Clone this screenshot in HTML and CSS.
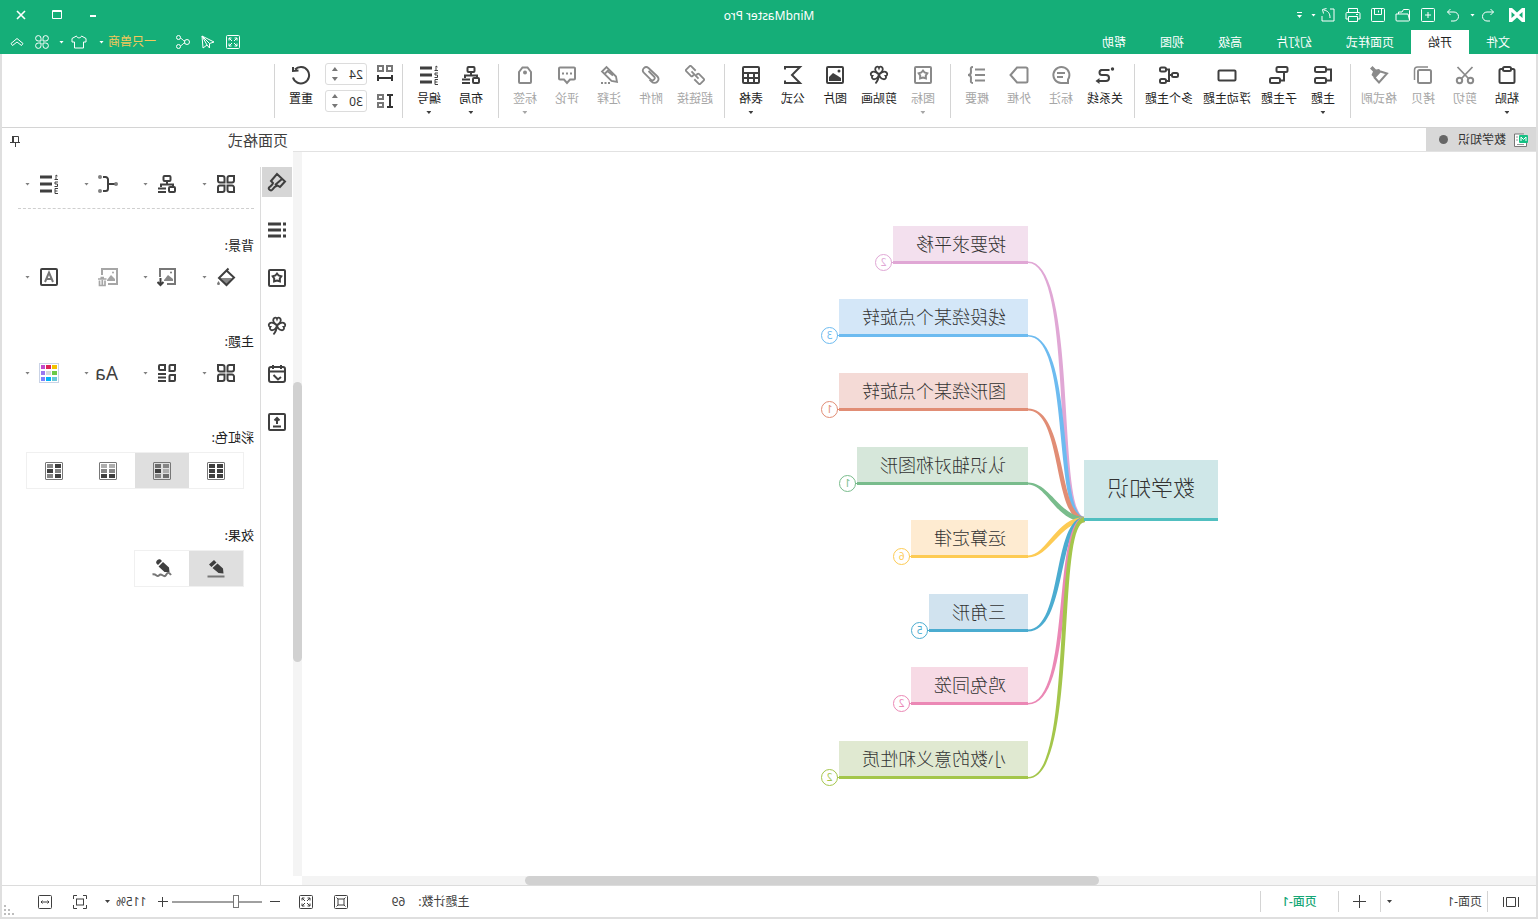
FILE: index.html
```html
<!DOCTYPE html>
<html lang="zh-CN">
<head>
<meta charset="utf-8">
<title>MindMaster Pro</title>
<link rel="stylesheet" href="styles.css">
</head>
<body>
<svg class="defs" aria-hidden="true">
  <symbol id="grid4" viewBox="0 0 20 20"><path d="M2 2h4.500a2 2 0 0 1 2 2v4.500h-4.500a2 2 0 0 1-2-2zM18 2v4.500a2 2 0 0 1-2 2h-4.500v-4.500a2 2 0 0 1 2-2zM2 18v-4.500a2 2 0 0 1 2-2h4.500v4.500a2 2 0 0 1-2 2zM18 18h-4.500a2 2 0 0 1-2-2v-4.500h4.500a2 2 0 0 1 2 2z"/></symbol>
  <symbol id="star" viewBox="0 0 20 20"><rect x="2" y="2" width="16" height="16" rx="1"/><path d="M10 5.500l1.600 2 2.700.8-1.500 2.200.1 2.800-2.900-.8-2.900.8.1-2.800-1.500-2.200 2.700-.8z"/></symbol>
  <symbol id="clover" viewBox="0 0 20 20"><path stroke-width="1.800" d="M10 9C7 7 5.500 5 6.500 3S9.500 1.500 10 3c.5-1.500 2.500-2 3.500 0S13 7 10 9zM10 9.500C7 6.500 4 6 2.500 7.500s-.5 3.500.8 3.500c-1 1.500.2 3.500 2.200 3.200S9 12.500 10 9.500zM10 9.500c3-3 6-3.500 7.500-2s.5 3.500-.8 3.500c1 1.500-.2 3.500-2.200 3.200S11 12.500 10 9.500zM10 9.500c.2 4 1.200 6.500 3.500 9"/></symbol>
  <symbol id="layout" viewBox="0 0 20 20"><rect x="6.500" y="2" width="7" height="5" rx="1"/><path d="M10 7v4M4 13v-2.500h12v2.500M11 14.500h8M11 18h8"/><rect x="2" y="13" width="6" height="5" rx="1"/></symbol>
  <symbol id="numbers" viewBox="0 0 20 20"><path stroke-width="3" d="M7 3h12M7 10h12M7 17h12"/><path stroke-width="1" d="M1.500 2l1.500-1v4.500M1 5.500h3.500M1 8h3v2h-2.500v2.500h3M1 14.500h3v5h-3M1.500 17h2.500"/></symbol>
  <symbol id="expand" viewBox="0 0 16 16"><rect x="1.500" y="1.500" width="13" height="13" rx="1"/><path d="M4 6.500v-2.500h2.500M4 4l3 3M9.500 4h2.500v2.500M12 4l-3 3M4 9.500v2.500h2.500M4 12l3-3M12 9.500v2.500h-2.500M12 12l-3-3"/></symbol>
</svg>
<div class="app">
  <header class="top">
    <div class="titlebar">
      <div class="quick">
        <svg class="logo" viewBox="0 0 16 16"><path fill="#fff" d="M0 1l3 0 5 4.500 5-4.500h3v14l-3 0-5-4.500-5 4.500h-3zM2.500 5v6l3.500-3zM13.500 5v6l-3.500-3z" fill-rule="evenodd"/></svg>
        <button class="tool undo" aria-label="撤销"><svg class="i16" viewBox="0 0 16 16"><path d="M5.500 2L2.500 5l3 3M2.500 5h6.500a4.500 4.500 0 0 1 0 9h-3"/></svg><i class="caret"></i></button>
        <button class="tool" aria-label="恢复"><svg class="i16" viewBox="0 0 16 16"><path d="M10.500 2l3 3-3 3M13.500 5h-6.500a4.500 4.500 0 0 0 0 9h3"/></svg></button>
        <button class="tool" aria-label="新建"><svg class="i16" viewBox="0 0 16 16"><rect x="1.500" y="1.500" width="13" height="13" rx="1"/><path d="M8 5v6M5 8h6"/></svg></button>
        <button class="tool" aria-label="打开"><svg class="i16" viewBox="0 0 16 16"><path d="M1.500 13v-9.500a1 1 0 0 1 1-1h5l1.500 2.500h3.500v2M1.500 13l1.500-6h12v6a1 1 0 0 1-1 1h-11.500a1 1 0 0 1-1-1z"/></svg></button>
        <button class="tool" aria-label="保存"><svg class="i16" viewBox="0 0 16 16"><rect x="1.500" y="1.500" width="13" height="13" rx="1"/><path d="M4.500 2v5.500h7v-5.500M7.500 3.500v2"/></svg></button>
        <button class="tool" aria-label="打印"><svg class="i16" viewBox="0 0 16 16"><path d="M3.500 5v-3.500h9v3.500M3.500 12h-2.500v-5.500a1 1 0 0 1 1-1h12a1 1 0 0 1 1 1v5.500h-2.500M3.500 9.500h9v5h-9zM3 7.500h2"/></svg></button>
        <button class="tool export" aria-label="导出"><svg class="i16" viewBox="0 0 16 16"><path d="M6 2h-4v12h12v-5M6 11c0-5 2-7 6-8M9.500 1.500l4 1-1 4"/></svg><i class="caret"></i></button>
        <button class="tool" aria-label="自定义"><i class="bar"></i><i class="caret"></i></button>
      </div>
      <h1>MindMaster Pro</h1>
      <div class="window">
        <button aria-label="最小化"><svg class="i16" viewBox="0 0 16 16"><path stroke-width="2" d="M5 9h6"/></svg></button>
        <button aria-label="最大化"><svg class="i16" viewBox="0 0 16 16"><path d="M3.500 3.500h9v8h-9zM3.500 4.500h9"/></svg></button>
        <button aria-label="关闭"><svg class="i16" viewBox="0 0 16 16"><path stroke-width="1.600" d="M4 4l8 8M12 4l-8 8"/></svg></button>
      </div>
    </div>
    <div class="tabrow">
      <nav class="tabs">
        <button>文件</button><button class="on">开始</button><button>页面样式</button><button>幻灯片</button><button>高级</button><button>视图</button><button>帮助</button>
      </nav>
      <div class="account">
        <button aria-label="全屏"><svg class="i16"><use href="#expand"/></svg></button>
        <button aria-label="发送"><svg class="i16" viewBox="0 0 16 16"><path d="M14 2L2 8l4.500 1.500v4.500l2.500-3 4 3zM14 2l-7.500 7.500M14 2l-5 9"/></svg></button>
        <button aria-label="分享"><svg class="i16" viewBox="0 0 16 16"><circle cx="4" cy="8" r="2.500"/><circle cx="12.500" cy="3.500" r="2"/><circle cx="12.500" cy="12.500" r="2"/><path d="M6 7c2 0 2.500-2 4.500-3M6 9c2 0 2.500 2 4.500 3"/></svg></button>
        <button class="user">一只兽商<i class="caret"></i></button>
        <button class="skin" aria-label="皮肤"><svg class="i16" viewBox="0 0 16 16"><path d="M5.500 2L1 4.500v3.500h2.500v6h9v-6H15V4.500L10.500 2c-.5 2.500-4.500 2.500-5 0z"/></svg><i class="caret"></i></button>
        <button aria-label="应用"><svg class="i16" viewBox="0 0 16 16"><path d="M7 7H4.500A2.700 2.700 0 1 1 7 4.500zM9 7h2.500A2.700 2.700 0 1 0 9 4.500zM7 9H4.500A2.700 2.700 0 1 0 7 11.500zM9 9h2.500A2.700 2.700 0 1 1 9 11.500z"/></svg></button>
        <button aria-label="收起"><svg class="i16" viewBox="0 0 16 16"><path d="M2 9.500l6-5 6 5-1.500 2L8 8l-4.500 3.500z"/></svg></button>
      </div>
    </div>
  </header>
  <div class="workspace">
    <div class="ribbon">
      <div class="group">
        <button><svg class="i20" viewBox="0 0 20 20"><rect x="2.500" y="4" width="15" height="14" rx="1.500"/><rect x="6" y="2" width="8" height="4" rx="1.500" fill="#fff"/></svg><span>粘贴</span><i class="caret"></i></button>
        <button disabled><svg class="i20" viewBox="0 0 20 20"><circle cx="4.500" cy="15.500" r="2.700"/><circle cx="15.500" cy="15.500" r="2.700"/><path stroke-width="1.800" d="M2.500 2L13.500 13.500M17.500 2L6.500 13.500"/></svg><span>剪切</span></button>
        <button disabled><svg class="i20" viewBox="0 0 20 20"><path stroke-width="1.500" d="M5 2h10.500a3 3 0 0 1 3 3v10"/><rect x="2" y="5" width="13" height="13" rx="1.500"/></svg><span>拷贝</span></button>
        <button disabled><svg class="i20" viewBox="0 0 20 20"><path fill="currentColor" stroke="none" d="M19 3.500L16.500 1l-3.500 3.500L10 4 7.500 6.500 14 13.500l3.500-3.500-1.500-3.500z"/><path d="M8.500 6.500L2 8.500l8 9L15 12"/></svg><span>格式刷</span></button>
      </div>
      <div class="group">
        <button><svg class="i20" viewBox="0 0 20 20"><rect x="7" y="2" width="11" height="5" rx="1.500"/><rect x="7" y="13" width="11" height="5" rx="1.500"/><path d="M7 4.500H2v11h5"/></svg><span>主题</span><i class="caret"></i></button>
        <button><svg class="i20" viewBox="0 0 20 20"><rect x="1.500" y="2" width="11" height="5" rx="1.500"/><rect x="9" y="13" width="10" height="5" rx="1.500"/><path d="M5 7v8.500h4"/></svg><span>子主题</span></button>
        <button><svg class="i20" viewBox="0 0 20 20"><rect x="1.500" y="5.500" width="17" height="10" rx="1"/></svg><span>浮动主题</span></button>
        <button><svg class="i20" viewBox="0 0 20 20"><rect x="1" y="8" width="6" height="4" rx="1.500"/><rect x="13" y="2.500" width="6" height="4" rx="1.500"/><rect x="13" y="14" width="6" height="4" rx="1.500"/><path d="M7 10h3M13 4.500h-3v11.500h3"/></svg><span>多个主题</span></button>
      </div>
      <div class="group">
        <button><svg class="i20" viewBox="0 0 20 20"><circle cx="2.500" cy="4" r="1.700" fill="currentColor" stroke="none"/><path d="M14.500 5H8a2.500 2.500 0 0 0-.5 0M5.500 5h7.500a2.500 2.500 0 0 1 0 5H9a3 3 0 0 0 0 6h7"/><path fill="currentColor" stroke="none" d="M15.500 13l4 3-4 3z"/></svg><span>关系线</span></button>
        <button disabled><svg class="i20" viewBox="0 0 20 20"><path d="M3 18v-3.500a8 8 0 1 1 7 3.500zM6 8h8M8 12h6"/></svg><span>标注</span></button>
        <button disabled><svg class="i20" viewBox="0 0 20 20"><path d="M3 2.500h9l6.500 7.500-6.500 7.500H3a1.500 1.500 0 0 1-1.500-1.500v-12A1.500 1.500 0 0 1 3 2.500z"/></svg><span>外框</span></button>
        <button disabled><svg class="i20" viewBox="0 0 20 20"><path d="M2 4.500h10M2 10h10M2 15.500h10M14 2c3 0 2 2 2 5 0 2 .5 3 3 3-2.500 0-3 1-3 3 0 3 1 5-2 5"/></svg><span>概要</span></button>
      </div>
      <div class="group">
        <button disabled><svg class="i20"><use href="#star"/></svg><span>图标</span><i class="caret"></i></button>
        <button><svg class="i20"><use href="#clover"/></svg><span>剪贴画</span></button>
        <button><svg class="i20" viewBox="0 0 20 20"><rect x="2" y="2" width="16" height="16" rx="1"/><path fill="currentColor" stroke="none" d="M4 16v-3l3-2 5-3 4 4v4z"/><circle cx="6" cy="6" r="1.500" fill="currentColor" stroke="none"/></svg><span>图片</span></button>
        <button><svg class="i20" viewBox="0 0 20 20"><path d="M18 4.500V2H3l8 8-8 8h15v-2.500"/></svg><span>公式</span></button>
        <button><svg class="i20" viewBox="0 0 20 20"><rect x="2" y="2" width="16" height="16" rx="1"/><path d="M2 8h16M2 13h16M7 8v10M13 8v10"/></svg><span>表格</span><i class="caret"></i></button>
      </div>
      <div class="group">
        <button disabled><svg class="i20" viewBox="0 0 20 20"><path stroke-width="1.800" transform="rotate(-45 10 10)" d="M7.500 13.500H1a1 1 0 0 1-1-1v-5a1 1 0 0 1 1-1h7a1 1 0 0 1 1 1V9M12.500 6.500H19a1 1 0 0 1 1 1v5a1 1 0 0 1-1 1h-7a1 1 0 0 1-1-1V11M5 10h10"/></svg><span>超链接</span></button>
        <button disabled><svg class="i20" viewBox="0 0 20 20"><path stroke-width="1.800" d="M12.500 6L7 11.500a2.200 2.200 0 0 0 3.200 3.200l7-7c2.800-3.200-1.500-7.500-4.700-4.700L4 11c-4 4 1.500 9.500 5.500 5.500l2-2"/></svg><span>附件</span></button>
        <button disabled><svg class="i20" viewBox="0 0 20 20"><path stroke-width="1.800" d="M2 17l1-5.500L12.500 2l4.500 4.500-9.500 9.500zM10 4.500l4.500 4.500M6 10.500l5-4"/><path stroke-dasharray="2 1.500" d="M9 18h10"/></svg><span>注释</span></button>
        <button disabled><svg class="i20" viewBox="0 0 20 20"><path d="M3 2.500h14a1 1 0 0 1 1 1v10a1 1 0 0 1-1 1h-4l-3 3.500-3-3.500H3a1 1 0 0 1-1-1v-10a1 1 0 0 1 1-1z"/><path stroke-dasharray="2 2" d="M5 8.500h10"/></svg><span>评论</span></button>
        <button disabled><svg class="i20" viewBox="0 0 20 20"><path d="M4 17V7l3.500-4.500h5L16 7v10a1 1 0 0 1-1 1H5a1 1 0 0 1-1-1z"/><circle cx="10" cy="7.500" r="2" fill="currentColor" stroke="none"/></svg><span>标签</span><i class="caret"></i></button>
      </div>
      <div class="group">
        <button><svg class="i20"><use href="#layout"/></svg><span>布局</span><i class="caret"></i></button>
        <button><svg class="i20"><use href="#numbers"/></svg><span>编号</span><i class="caret"></i></button>
      </div>
      <div class="group">
        <div class="spacing">
          <label for="hgap" aria-label="水平间距"><svg class="i20" viewBox="0 0 20 20"><path stroke="#777" d="M3 2h5v5H3zM12 2h5v5h-5z"/><path d="M3 14h14M3 11v6M17 11v6"/></svg></label>
          <div class="spin"><input id="hgap" value="24"><span class="arrows"><button aria-label="增加"></button><button class="down" aria-label="减少"></button></span></div>
          <label for="vgap" aria-label="垂直间距"><svg class="i20" viewBox="0 0 20 20"><path stroke="#777" d="M12 4h5v4h-5zM12 12h5v4h-5z"/><path d="M5 4v12M2 4h6M2 16h6"/></svg></label>
          <div class="spin"><input id="vgap" value="30"><span class="arrows"><button aria-label="增加"></button><button class="down" aria-label="减少"></button></span></div>
        </div>
        <button><svg class="i20" viewBox="0 0 20 20"><path d="M4 4.500a8.200 8.200 0 1 1-2 8M7.500 5.500L2 6V2" transform="translate(20 0) scale(-1 1)"/></svg><span>重置</span></button>
      </div>
    </div>
    <main class="main">
      <section class="document">
        <div class="doctabs">
          <button class="doctab"><svg class="i16" viewBox="0 0 16 16"><path fill="#fff" stroke="#777" d="M5 2h9.500v12.500H2.500V11"/><path stroke="#999" d="M11 5h2M11 8h2M5 12.500h7"/><rect x="1" y="3" width="9" height="8" rx="1" fill="#15c083" stroke="none"/><path stroke="#fff" d="M3 9V5l2.500 2.500L8 5v4"/></svg>数学知识<i class="dot"></i></button>
        </div>
        <div class="viewport">
          <div class="canvas">
            <svg class="links" viewBox="2 152 1234 724">
              <path fill="#e0a7d5" d="M453 517C482 517 459 261.500 510 261.500V263C463 263 488 522 453 522z"/>
              <path fill="#6dbbf0" d="M453 517C481 517 462 335 510 335V336.500C466 336.500 487 522 453 522z"/>
              <path fill="#e18d75" d="M453 517C480 517 471 408.500 510 408.500V410.500C475 410.500 486 522 453 522z"/>
              <path fill="#79bc8c" d="M453 517C478 517 488 482.500 510 482.500V484.500C491 484.500 482 522 453 522z"/>
              <path fill="#fdcb54" d="M453 522C478 522 488 557.500 510 557.500V555.500C491 555.500 482 517 453 517z"/>
              <path fill="#4bacd0" d="M453 522C480 522 471 631.500 510 631.500V629.500C475 629.500 486 517 453 517z"/>
              <path fill="#eb88b5" d="M453 522C481 522 462 704.500 510 704.500V703C466 703 487 517 453 517z"/>
              <path fill="#a4c64b" d="M453 522C482 522 459 778.500 510 778.500V777C463 777 488 517 453 517z"/>
            </svg>
            <div class="topic root">数学知识</div>
            <div class="topic pink">按要求平移<b>2</b></div>
            <div class="topic blue">线段绕某个点旋转<b>3</b></div>
            <div class="topic red">图形绕某个点旋转<b>1</b></div>
            <div class="topic green">认识轴对称图形<b>1</b></div>
            <div class="topic yellow">运算定律<b>6</b></div>
            <div class="topic cyan">三角形<b>5</b></div>
            <div class="topic rose">鸡兔同笼<b>2</b></div>
            <div class="topic lime">小数的意义和性质<b>2</b></div>
          </div>
          <div class="vscroll"><i></i></div>
          <div class="hscroll"><i></i></div>
        </div>
      </section>
      <aside class="panel">
        <div class="panelhead"><h2>页面格式</h2><button aria-label="固定"><svg class="i12" viewBox="0 0 12 12"><path d="M2.500 1.500h6v6h-6zM1 7.500h10M5.500 8v4"/><path stroke-width="2" d="M8 1v6"/></svg></button></div>
        <div class="panelbody">
          <nav class="strip">
            <button class="on" aria-label="格式"><svg class="i20" viewBox="0 0 20 20"><path d="M10 2L2 9.500l5 5.500 2.500-1.500c2.500.5 3.500 1.500 5 4 1.500 2 4.500 0 3.500-2-1.500-1.500-3.500-2-4-4.500L16 9zM5 7l7 6"/></svg></button>
            <button aria-label="大纲"><svg class="i20" viewBox="0 0 20 20"><path stroke-width="3" d="M6 4h13M6 10h13M6 16h13M1 4h3M1 10h3M1 16h3"/></svg></button>
            <button aria-label="图标"><svg class="i20"><use href="#star"/></svg></button>
            <button aria-label="剪贴画"><svg class="i20"><use href="#clover"/></svg></button>
            <button aria-label="任务"><svg class="i20" viewBox="0 0 20 20"><rect x="2" y="3" width="16" height="15" rx="2"/><path d="M2 7.500h16M6 1v4M14 1v4M6 13l3 2.500 4.500-4.500"/></svg></button>
            <button aria-label="导出"><svg class="i20" viewBox="0 0 20 20"><rect x="2" y="2" width="16" height="16" rx="1"/><path d="M6 14.500h8M10 12V6M7.500 8.500L10 6l2.500 2.500"/></svg></button>
          </nav>
          <div class="settings">
            <div class="tools">
              <button aria-label="结构"><svg class="i20"><use href="#grid4"/></svg><i class="caret"></i></button>
              <button aria-label="布局"><svg class="i20"><use href="#layout"/></svg><i class="caret"></i></button>
              <button aria-label="连线"><svg class="i20" viewBox="0 0 20 20"><g fill="#808080" stroke="none"><circle cx="2" cy="10" r="2"/><circle cx="18" cy="3" r="2"/><circle cx="18" cy="17" r="2"/></g><path d="M3.500 10H10M15 3h-2.500A2.500 2.500 0 0 0 10 5.500v9a2.500 2.500 0 0 0 2.500 2.500H15"/></svg><i class="caret"></i></button>
              <button aria-label="编号"><svg class="i20"><use href="#numbers"/></svg><i class="caret"></i></button>
            </div>
            <hr>
            <h3>背景:</h3>
            <div class="tools">
              <button aria-label="填充"><svg class="i20" viewBox="0 0 20 20"><path fill="#888" stroke="none" d="M4 11h12l-6.500 7z"/><path d="M7.500 1.500L17 11l-7.500 7L2 10.500 9.500 3.500"/><path fill="#777" stroke="none" d="M17.500 14l1.500 2.500a1.500 1.500 0 1 1-3 0z"/></svg><i class="caret"></i></button>
              <button aria-label="背景图"><svg class="i20" viewBox="0 0 20 20"><path stroke="#777" d="M10 17H2V2h15v8"/><path fill="#888" stroke="none" d="M4 14v-2l5-4 4 5v1z"/><circle cx="6" cy="5.500" r="1" fill="#777" stroke="none"/><path d="M16.500 11v7M13.500 15l3 3 3-3"/></svg><i class="caret"></i></button>
              <button disabled aria-label="删除背景"><svg class="i20" viewBox="0 0 20 20"><path d="M10 17H1V2h15v6"/><path fill="currentColor" stroke="none" d="M3 14v-2l4-4 4 5v1z"/><circle cx="5" cy="5.500" r="1" fill="currentColor" stroke="none"/><path stroke-width="1.700" d="M11.500 12h8.500M14 10.500h3.500M13 13.500v5h5.500v-5M15.700 13v5"/></svg></button>
              <button aria-label="水印"><svg class="i20" viewBox="0 0 20 20"><rect x="2" y="2" width="16" height="16" rx="1"/><path stroke="#777" d="M6 15l4-9.500 4 9.500M7.500 12h5"/></svg><i class="caret"></i></button>
            </div>
            <h3>主题:</h3>
            <div class="tools">
              <button aria-label="主题"><svg class="i20"><use href="#grid4"/></svg><i class="caret"></i></button>
              <button aria-label="风格"><svg class="i20" viewBox="0 0 20 20"><path d="M2 2h4.500a1 1 0 0 1 1 1v5H3a1 1 0 0 1-1-1zM12 2h5a1 1 0 0 1 1 1v3a1 1 0 0 1-1 1h-5zM2 12h4.500a1 1 0 0 1 1 1v5H3a1 1 0 0 1-1-1zM11 11h8M11 14.500h8M11 18h8"/></svg><i class="caret"></i></button>
              <button class="font" aria-label="字体"><span>Aa</span><i class="caret"></i></button>
              <button aria-label="颜色"><svg class="i20" viewBox="0 0 20 20"><rect x=".5" y=".5" width="19" height="19" fill="#fff" stroke="#c9d3e6" stroke-width="1"/><g stroke="none"><path fill="#f2c100" d="M2 2h5v4H2z"/><path fill="#de2457" d="M8 2h5v4H8z"/><path fill="#c24bcb" d="M14 2h4v4h-4z"/><path fill="#6cca45" d="M2 8h5v4H2z"/><path fill="#d9d9d9" d="M8 8h5v4H8z"/><path fill="#9a78f0" d="M14 8h4v4h-4z"/><path fill="#68c8d8" d="M2 14h5v4H2z"/><path fill="#00b4f5" d="M8 14h5v4H8z"/><path fill="#7b83ff" d="M14 14h4v4h-4z"/></g></svg><i class="caret"></i></button>
            </div>
            <h3>彩虹色:</h3>
            <div class="segment">
              <button aria-label="彩虹色一"><span class="swatch"><i class="d"></i><i class="d"></i><i class="d"></i><i class="d"></i><i class="d"></i><i class="d"></i></span></button>
              <button class="on" aria-label="彩虹色二"><span class="swatch"><i class="g"></i><i class="m"></i><i class="l"></i><i class="d"></i><i class="m"></i><i class="g"></i></span></button>
              <button aria-label="彩虹色三"><span class="swatch"><i class="l"></i><i class="l"></i><i class="g"></i><i class="g"></i><i class="d"></i><i class="d"></i></span></button>
              <button aria-label="彩虹色四"><span class="swatch"><i class="d"></i><i class="g"></i><i class="g"></i><i class="d"></i><i class="d"></i><i class="g"></i></span></button>
            </div>
            <h3 class="effect">效果:</h3>
            <div class="segment">
              <button class="on" aria-label="钢笔"><svg class="i20" viewBox="0 0 20 20"><path fill="currentColor" stroke="none" d="M2.500 14.500l.5-5 5.500-5 5 4.500-6 5zM9.500 3.500L12 1l5 4.500L14.500 8z"/><path stroke="#777" d="M1.500 17.500h17"/></svg></button>
              <button aria-label="手绘"><svg class="i20" viewBox="0 0 20 20"><path fill="currentColor" stroke="none" d="M2.500 13l.5-4.500 6-5.500 4.500 4.500-6 5.500zM10 2l1.500-1.500c2-1.500 5.500 2 4 4L14 6z"/><path stroke="#777" d="M1 16c2-3 3.500-3 5 0s4-1 5.500-.5 2 2.500 4 1 2.500-1.500 4-1"/></svg></button>
            </div>
          </div>
        </div>
      </aside>
    </main>
    <footer class="status">
      <button class="views" aria-label="页面视图"><svg class="i16" viewBox="0 0 16 16"><path d="M.5 3v10M15.500 3v10M3.500 3.500h9v9h-9z"/></svg></button>
      <button class="pagepick">页面-1<i class="caret"></i></button>
      <button class="add" aria-label="添加页面"><svg class="i16" viewBox="0 0 16 16"><path d="M7.500 1v13M1 7.500h13"/></svg></button>
      <button class="page">页面-1</button>
      <div class="right">
        <p class="count"><span>主题计数:</span><span>69</span></p>
        <button aria-label="适应页面"><svg class="i16" viewBox="0 0 16 16"><rect x="1.500" y="1.500" width="13" height="13" rx="1"/><rect x="5" y="5" width="6" height="6"/><path d="M3.500 3.500l1.500 1.500M12.500 3.500L11 5M3.500 12.500L5 11M12.500 12.500L11 11"/></svg></button>
        <button class="full" aria-label="全屏"><svg class="i16"><use href="#expand"/></svg></button>
        <div class="zoom">
          <button aria-label="缩小"><svg class="i12" viewBox="0 0 12 12"><path d="M1 5.500h10"/></svg></button>
          <input type="range" aria-label="缩放" min="0" max="100" value="27">
          <button aria-label="放大"><svg class="i12" viewBox="0 0 12 12"><path d="M1 5.500h10M6.500 1v10"/></svg></button>
        </div>
        <button class="percent">115%<i class="caret"></i></button>
        <button aria-label="实际大小"><svg class="i16" viewBox="0 0 16 16"><rect x="4.500" y="5" width="7" height="6"/><path d="M1.500 5V1.500H5M11 1.500h3.500V5M1.500 11v3.500H5M11 14.500h3.500V11"/></svg></button>
        <button class="fitw" aria-label="适应宽度"><svg class="i16" viewBox="0 0 16 16"><rect x="1.500" y="1.500" width="13" height="13" rx="1"/><path d="M4 8h8M5.500 6.500L4 8l1.500 1.500M10.500 6.500L12 8l-1.500 1.500"/></svg></button>
        <svg class="grip" viewBox="0 0 12 12"><path fill="#bdbdbd" stroke="none" d="M8 0h2v2H8zM4 4h2v2H4zM8 4h2v2H8zM0 8h2v2H0zM4 8h2v2H4zM8 8h2v2H8z"/></svg>
      </div>
    </footer>
  </div>
</div>
</body>
</html>
```

FILE: styles.css
```css
* { box-sizing: border-box; }
body {
  margin: 0;
  overflow: hidden;
  font: 12px/16px "Noto Sans", "Noto Sans CJK SC", sans-serif;
  color: #333;
}
button {
  border: 0;
  padding: 0;
  background: none;
  font: inherit;
  color: inherit;
  display: flex;
  align-items: center;
}
h1, h2, h3, p { margin: 0; font-weight: 400; }
.defs { position: absolute; width: 0; height: 0; }
svg { display: block; fill: none; stroke: currentColor; stroke-width: 2; flex: none; }
.i12 { width: 12px; height: 12px; stroke-width: 1; }
.i16 { width: 16px; height: 16px; stroke-width: 1; }
.i20 { width: 20px; height: 20px; }
.caret {
  width: 5px;
  height: 3px;
  background: currentColor;
  clip-path: polygon(0 0, 100% 0, 50% 100%);
  flex: none;
}

/* The whole window is shown flipped left to right */
.app {
  display: flex;
  flex-direction: column;
  height: 100vh;
  transform: scaleX(-1);
  background: #fff;
}

/* Title bar and tabs */
.top { background: #15ae78; color: #fff; }
.titlebar { display: grid; grid-template-columns: 1fr auto 1fr; align-items: center; height: 30px; }
.titlebar h1 { font-size: 12px; line-height: 16px; padding-top: 1px; }
.quick { display: flex; align-items: center; gap: 9px; padding-left: 13px; }
.logo { width: 16px; height: 16px; stroke: none; margin-right: 4px; }
.tool { gap: 5px; }
.tool.export { gap: 4px; }
.tool:last-child { flex-direction: column; gap: 2px; }
.bar { width: 5px; height: 1px; background: currentColor; }
.window { display: flex; justify-content: flex-end; padding-right: 3px; }
.window button { width: 36px; justify-content: center; }
.tabrow { display: flex; justify-content: space-between; height: 24px; }
.tabs { display: flex; padding-left: 11px; }
.tabs button { padding: 2px 17px 0; }
.tabs .on { background: #fff; color: #222; }
.account { display: flex; align-items: center; gap: 9px; padding-right: 9px; }
.account .user { gap: 4px; color: #f5c85a; margin: 0 3px 0 10px; }
.account .user .caret { color: #fff; }
.account .skin { gap: 7px; }

.workspace {
  flex: 1;
  min-height: 0;
  display: flex;
  flex-direction: column;
  border: solid #dfdfdf;
  border-width: 0 2px 2px;
}

/* Ribbon */
.ribbon { display: flex; height: 74px; padding-left: 8px; border-bottom: 1px solid #d4d4d4; flex: none; }
.group { display: flex; }
.group::after { content: ""; width: 1px; height: 54px; margin: 10px 6px 0 5px; background: #d4d4d4; }
.group > button {
  flex-direction: column;
  min-width: 42px;
  padding: 11px 5px 0;
  color: #3f3f3f;
  white-space: nowrap;
}
.group > button span { margin-top: 6px; color: #222; }
.group > button .caret { margin-top: 4px; }
.group > button:disabled { color: #8a8a8a; }
.group > button:disabled span, .group > button:disabled .caret { color: #a6a6a6; }
.spacing {
  display: grid;
  grid-template-columns: 20px 42px;
  grid-template-rows: 22px 22px;
  gap: 5px 8px;
  align-items: center;
  padding: 9px 3px 0 1px;
}
.spin { display: flex; height: 22px; border: 1px solid #dcdcdc; border-radius: 3px; }
.spin input { flex: 1; min-width: 0; border: 0; padding: 2px 0 0 3px; font: inherit; color: #333; background: none; }
.arrows { display: flex; flex-direction: column; justify-content: center; gap: 6px; padding-right: 6px; }
.arrows button { width: 6px; height: 4px; background: #777; clip-path: polygon(50% 0, 100% 100%, 0 100%); }
.arrows .down { clip-path: polygon(0 0, 100% 0, 50% 100%); }

/* Document area */
.main { flex: 1; min-height: 0; display: grid; grid-template-columns: 1fr 291px; }
.document { display: flex; flex-direction: column; min-width: 0; }
.doctabs { display: flex; height: 24px; border-bottom: 1px solid #e2e2e2; }
.doctab { gap: 7px; width: 110px; padding-left: 7px; background: #d8d8d8; color: #333; }
.dot { width: 9px; height: 9px; border-radius: 50%; background: #666; margin-left: 3px; }
.viewport { flex: 1; min-height: 0; display: grid; grid-template: 1fr 9px / 1fr 9px; }
.canvas { position: relative; overflow: hidden; }
.vscroll, .hscroll { position: relative; background: #f4f4f4; }
.vscroll i, .hscroll i { position: absolute; border-radius: 5px; background: #d1d1d1; }
.vscroll i { top: 31.8%; height: 38.7%; left: 0; right: 0; }
.hscroll i { left: 35.4%; width: 46.5%; top: 0; bottom: 0; }

/* Mind map */
.links { position: absolute; left: 0; top: 0; width: 1234px; height: 724px; stroke: none; }
.topic {
  position: absolute;
  left: 508px;
  height: 38px;
  padding: 0 23px 0 22px;
  border-bottom: 3px solid var(--line);
  background: var(--fill);
  font-size: 18px;
  font-weight: 300;
  line-height: 37px;
  white-space: nowrap;
  color: #333;
}
.topic b {
  position: absolute;
  left: 100%;
  bottom: -10px;
  width: 17px;
  height: 17px;
  margin-left: 1px;
  border: 1px solid var(--line);
  border-radius: 50%;
  font-size: 10px;
  font-weight: 400;
  line-height: 15px;
  text-align: center;
  color: var(--line);
}
.topic b::before { content: ""; position: absolute; right: 100%; top: 7px; width: 2px; height: 1px; background: var(--line); }
.root { --fill: #cfe7e8; --line: #51bfc0; left: 318px; top: 308px; height: 61px; padding: 0 23px; font-size: 22px; line-height: 55px; }
.pink { --fill: #f3e0ee; --line: #e0a7d5; top: 74px; }
.blue { --fill: #d4e7f8; --line: #6dbbf0; top: 147px; }
.red { --fill: #f4dad6; --line: #e18d75; top: 221px; }
.green { --fill: #d6e7da; --line: #79bc8c; top: 295px; }
.yellow { --fill: #feebd1; --line: #fdcb54; top: 368px; }
.cyan { --fill: #d1e3ef; --line: #4bacd0; top: 442px; }
.rose { --fill: #f7dae5; --line: #eb88b5; top: 515px; }
.lime { --fill: #e0e9d1; --line: #a4c64b; top: 589px; }

/* Page format panel */
.panel { color: #3f3f3f; }
.panelhead { display: flex; justify-content: space-between; height: 26px; padding: 0 7px 0 5px; }
.panelhead h2 { font-size: 15px; line-height: 24px; }
.panelbody { display: flex; height: calc(100% - 39px); margin-top: 13px; }
.strip { display: flex; flex-direction: column; gap: 18px; width: 33px; padding-left: 1px; border-right: 1px solid #dcdcdc; flex: none; }
.strip button { width: 30px; height: 30px; justify-content: center; }
.strip .on { background: #d6d6d6; }
.settings { flex: 1; min-width: 0; padding: 7px 16px 0 6px; }
.tools { display: grid; grid-template-columns: repeat(4, 59px); padding-left: 18px; }
.tools button { gap: 9px; height: 20px; }
.tools button:disabled { color: #a6a6a6; }
.tools .caret { color: #808080; }
.tools .font { gap: 7px; }
.font span { width: 22px; font-size: 19px; line-height: 20px; }
hr { margin: 14px 0 26px; border: 0; border-top: 1px dashed #cfcfcf; }
h3 { font-size: 13px; line-height: 20px; margin-bottom: 12px; color: #222; }
.tools + h3 { margin-top: 44px; }
h3:has(+ .segment) { margin-bottom: 5px; }
h3.effect { margin-top: 36px; }
.segment { display: flex; width: max-content; margin-left: 10px; border: 1px solid #f0f0f0; }
.segment button { width: 54px; height: 35px; justify-content: center; }
.segment .on { background: #dfdfdf; }
.swatch { display: grid; grid-template: repeat(3, 4px) / 6px 6px; gap: 1px 2px; padding: 1px; border: 1px solid #777; border-radius: 1px; }
.swatch .d { background: #3f3f3f; }
.swatch .m { background: #6c6c6c; }
.swatch .g { background: #858585; }
.swatch .l { background: #adadad; }

/* Status bar */
.status { display: flex; align-items: center; height: 32px; border-top: 1px solid #dcdcdc; flex: none; color: #3f3f3f; }
.status > button { height: 21px; border-right: 1px solid #d4d4d4; }
.views { width: 49px; padding-left: 17px; }
.pagepick { width: 107px; padding: 0 6px 0 5px; justify-content: space-between; }
.add { width: 42px; justify-content: center; }
.status .page { width: 78px; justify-content: center; color: #16a776; font-weight: 500; }
.right { display: flex; align-items: center; margin-left: auto; align-self: stretch; }
.count { display: flex; gap: 13px; margin-right: 43px; }
.full { margin: 0 17px 0 19px; }
.zoom { display: flex; align-items: center; margin-right: 10px; }
.zoom input { width: 90px; height: 16px; margin: 0 3px 0 7px; appearance: none; background: none; }
.zoom input::-webkit-slider-runnable-track { height: 2px; background: #a0a0a0; }
.zoom input::-webkit-slider-thumb { appearance: none; width: 6px; height: 13px; margin-top: -6px; border: 1px solid #777; background: #fff; }
.percent { gap: 6px; margin-right: 17px; }
.fitw { margin: 0 23px 0 19px; }
.grip { width: 12px; height: 12px; align-self: flex-end; }
```
